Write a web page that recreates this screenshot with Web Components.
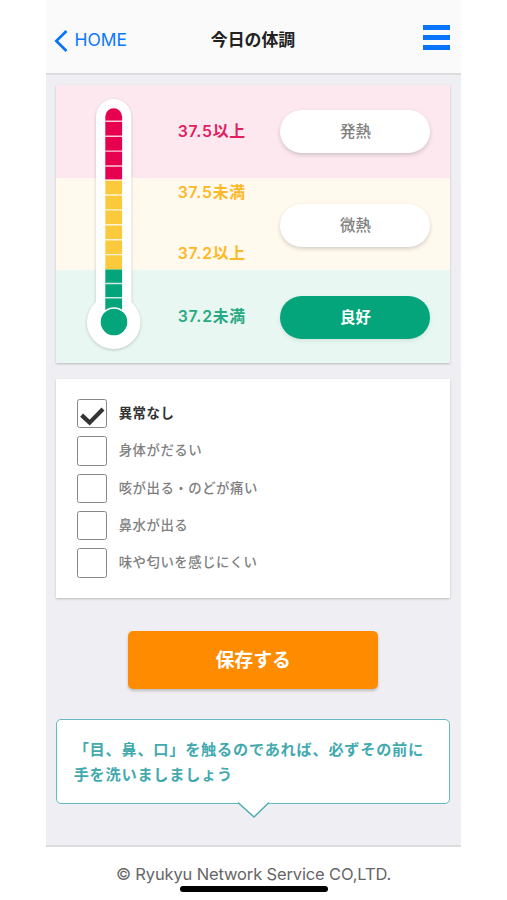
<!DOCTYPE html>
<html lang="ja">
<head>
<meta charset="utf-8">
<title>今日の体調</title>
<style>
body{margin:0;background:#fff;font-family:Inter,"Noto Sans CJK JP",sans-serif;-webkit-font-smoothing:antialiased}
</style>
</head>
<body>
<health-app></health-app>
<script>
function define(name, html){
  const t=document.createElement('template');
  t.innerHTML='<style>*{box-sizing:border-box}</style>'+html;
  customElements.define(name, class extends HTMLElement{
    constructor(){super();this.attachShadow({mode:'open'}).append(t.content.cloneNode(true));}
  });
}

define('nav-header', `<style>
:host{display:flex;box-sizing:border-box;height:75px;background:#fafafa;border-bottom:2px solid #dcdcde;padding:7px 11px 0 8px;align-items:center;justify-content:space-between}
.back{display:flex;align-items:center;gap:6.5px;color:#0a78fb;font-size:17.4px;line-height:20px;width:120px;letter-spacing:0}
.back span{margin-top:-1px}
.back svg{margin-top:2px}
h1{margin:0;font-size:16.9px;line-height:20px;font-weight:700;color:#222;padding-left:2px}
.menu{width:120px;display:flex;flex-direction:column;align-items:flex-end;gap:5px;margin-top:-5px}
.menu i{display:block;width:27px;height:5px;background:#0873fb}
</style>
<div class="back"><svg width="14" height="22" viewBox="0 0 14 22" fill="none" stroke="#0873fb" stroke-width="2.7"><path d="M12.5 1 2.3 11 12.5 21"/></svg><span>HOME</span></div>
<h1>今日の体調</h1>
<div class="menu"><i></i><i></i><i></i></div>`);

define('thermo-meter', `<style>
:host{display:block;width:58px;height:258px}
svg{display:block;overflow:visible;filter:drop-shadow(0 1.5px 1.5px rgba(0,0,0,.2))}
</style>
<svg width="58" height="258" viewBox="85 95 58 258">
<defs><clipPath id="tube"><path d="M105.3 310V116.6a8.4 8.4 0 0 1 16.8 0V310z"/></clipPath></defs>
<path d="M96 116.7a17.7 17.7 0 0 1 35.4 0V302.2A26.8 26.8 0 1 1 96 302.2z" fill="#fff"/>
<g clip-path="url(#tube)">
<path fill="#e6004f" d="M105 108h18v72h-18z"/><path fill="#fbca3c" d="M105 180h18v89.5h-18z"/><path fill="#05a57b" d="M105 269.5h18V310h-18z"/>
<path stroke="#fff" stroke-opacity=".8" stroke-width="1.4" d="M105 121.3h18m-18 14.9h18m-18 14.9h18m-18 14.9h18m-18 14h18m-18 15h18m-18 14.9h18m-18 14.9h18m-18 14.9h18m-18 14.9h18m-18 28.9h18m-18 14.3h18"/>
</g>
<circle cx="114" cy="322" r="14" fill="#05a57b" stroke="#fff" stroke-width="1.4"/>
</svg>`);

define('temp-band', `<style>
:host{display:flex;box-sizing:border-box;padding:0 20px 0 121.5px;justify-content:space-between;font-size:15.8px;line-height:20px;font-weight:600;letter-spacing:.75px}
.range{display:flex;flex-direction:column;justify-content:space-between}
</style><div class="range"><slot name="range"></slot></div><slot></slot>`);

define('pill-button', `<style>
:host{display:flex;box-sizing:border-box;width:150px;height:43px;border-radius:22px;background:#fff;color:#808080;align-items:center;justify-content:center;font-size:15.4px;line-height:20px;font-weight:500;letter-spacing:0;padding-top:1px;box-shadow:0 2px 4px rgba(0,0,0,.17)}
:host([selected]){background:#05a57b;color:#fff;font-weight:700;box-shadow:0 2px 4px rgba(0,80,50,.1)}
</style><slot></slot>`);

define('check-row', `<style>
:host{display:flex;align-items:center;gap:12px;height:29.4px;font-size:13.4px;letter-spacing:.52px;line-height:20px;font-weight:500;color:#808080}
:host([checked]){color:#333;font-weight:700}
.box{width:29.5px;height:29.4px;border:1.4px solid #888;border-radius:2.5px;flex:none}
svg{display:none}
:host([checked]) svg{display:block}
.label{margin-top:-1px}
</style><div class="box"><svg width="27" height="27" viewBox="0 0 27 27" fill="none" stroke="#333" stroke-width="4.2"><path d="M3.6 15.1l8 7.5L25 9"/></svg></div><span class="label"><slot></slot></span>`);

define('save-button', `<style>
:host{display:flex;box-sizing:border-box;width:250px;height:58px;border-radius:5px;background:#ff8b00;color:#fff;font-size:18.9px;line-height:24px;font-weight:600;align-items:center;justify-content:center;padding-top:2px;box-shadow:0 2px 3px rgba(0,0,0,.2)}
</style><slot></slot>`);

define('advice-bubble', `<style>
:host{display:block;position:relative;box-sizing:border-box;height:85px;border:1.4px solid #66b9bd;border-radius:5px;background:#fff;color:#42aaae;padding:17px 10px 0 16.5px;font-size:15.2px;letter-spacing:.74px;line-height:25.5px;font-weight:600;white-space:nowrap}
svg{position:absolute;left:181px;top:82px}
</style><slot></slot><svg width="32" height="18" viewBox="0 0 32 18"><path d="M0 0H32L16 15z" fill="#fff"/><path d="M0 .6 16 15 31 .6" fill="none" stroke="#4cadb1" stroke-width="1.4"/></svg>`);

define('page-footer', `<style>
:host{display:flex;flex-direction:column;box-sizing:border-box;height:55px;border-top:2px solid #dcdcde;background:#fff;align-items:center;padding-top:17px;color:#666;font-size:16.5px;letter-spacing:-.14px;line-height:21px;white-space:nowrap}
i{width:148px;height:5.5px;border-radius:3px;background:#000;margin-top:1px}
</style><slot></slot><i></i>`);

define('health-app', `<style>
:host{display:flex;flex-direction:column;width:415px;height:900px;margin-left:46px;background:#efeff3}
main{flex:1;display:flex;flex-direction:column;padding:10px 10.6px 0 10.2px}
.card{box-shadow:0 1px 2px rgba(0,0,0,.22)}
.temps{display:grid;grid-template-rows:93px 92px 93px;height:278px}
.temps temp-band{grid-column:1}
.hot{grid-row:1;background:#fde8ef;color:#e22061;padding-top:25px}
.mid{grid-row:2;background:#fffaed;color:#fdb827;padding-top:26px}
.ok{grid-row:3;background:#e9f7f3;color:#28aa82;padding-top:26px}
.hot span{margin-top:12px}
.ok span{margin-top:11px}
.mid .hi{margin-top:-21px}
.mid .lo{margin-bottom:6px}
thermo-meter{grid-column:1;grid-row:1/4;margin:10px 0 0 29px}
.checks{background:#fff;height:219px;margin-top:15.5px;padding:20.5px 21px 0;display:flex;flex-direction:column;gap:7.9px}
save-button{margin:33px 0 0 72px}
advice-bubble{margin-top:30px}
</style>
<nav-header></nav-header>
<main>
<section class="card temps">
<temp-band class="hot"><span slot="range">37.5以上</span><pill-button>発熱</pill-button></temp-band>
<temp-band class="mid"><span slot="range" class="hi">37.5未満</span><span slot="range" class="lo">37.2以上</span><pill-button>微熱</pill-button></temp-band>
<temp-band class="ok"><span slot="range">37.2未満</span><pill-button selected>良好</pill-button></temp-band>
<thermo-meter></thermo-meter>
</section>
<section class="card checks">
<check-row checked>異常なし</check-row>
<check-row>身体がだるい</check-row>
<check-row>咳が出る・のどが痛い</check-row>
<check-row>鼻水が出る</check-row>
<check-row>味や匂いを感じにくい</check-row>
</section>
<save-button>保存する</save-button>
<advice-bubble>「目、鼻、口」を触るのであれば、必ずその前に<br>手を洗いましましょう</advice-bubble>
</main>
<page-footer>© Ryukyu Network Service CO,LTD.</page-footer>`);
</script>
</body>
</html>
